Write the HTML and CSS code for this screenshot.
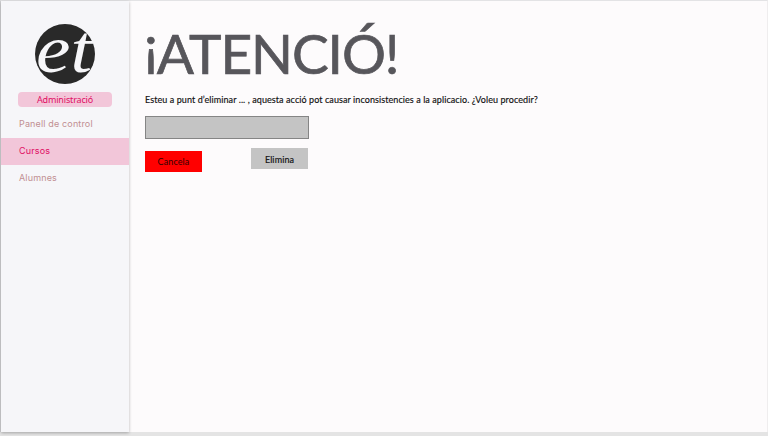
FILE: index.html
```html
<!DOCTYPE html>
<html lang="ca">
<head>
<meta charset="utf-8">
<title>Administració</title>
<link rel="stylesheet" href="styles.css">
</head>
<body>
<div class="app">
  <aside class="sidebar">
    <svg class="logo" viewBox="0 0 60 60" role="img" aria-label="et">
      <circle cx="30" cy="30" r="30"/>
      <text class="logo-text" x="1" y="48" textLength="56" lengthAdjust="spacingAndGlyphs">et</text>
    </svg>
    <div class="role">Administració</div>
    <nav class="menu">
      <a class="item">Panell de control</a>
      <a class="item active">Cursos</a>
      <a class="item">Alumnes</a>
    </nav>
  </aside>
  <main class="content">
    <h1><span class="open">¡</span>ATENCIÓ!</h1>
    <p class="message">Esteu a punt d’eliminar ... , aquesta acció pot causar inconsistencies a la aplicacio. ¿Voleu procedir?</p>
    <input class="field" type="text" aria-label="Confirmació">
    <div class="actions">
      <button class="btn cancel">Cancela</button>
      <button class="btn delete">Elimina</button>
    </div>
  </main>
</div>
</body>
</html>
```
FILE: styles.css
```css
* { box-sizing: border-box; }
body {
  margin: 0;
  height: 436px;
  overflow: hidden;
  background: #e4e4e4;
  font-family: Lato, "Liberation Sans", sans-serif;
}
.app {
  display: flex;
  height: 432px;
  background: #fdfbfc;
  border-top: 1px solid #e3e3e5;
  border-left: 1px solid #d4d4d6;
  border-right: 1px solid #efedee;
}
.sidebar {
  display: flex;
  flex-direction: column;
  align-items: center;
  width: 128px;
  padding-top: 23px;
  background: #f6f6f9;
  box-shadow: 0 1px 3px rgba(0, 0, 0, .28);
}
.logo { width: 60px; height: 60px; flex: none; overflow: visible; }
.logo circle { fill: #292929; }
.logo-text {
  fill: #f6f6f9;
  font: italic 67px "Liberation Serif", serif;
}
.role {
  width: 94px;
  height: 15px;
  margin-top: 8px;
  border-radius: 4px;
  background: #f2c6d9;
  color: #e00d63;
  font: 9px/15px "Noto Sans", sans-serif;
  letter-spacing: -.15px;
  text-align: center;
}
.menu { width: 100%; margin-top: 3.500px; }
.item {
  display: block;
  height: 27px;
  padding-left: 18px;
  color: #c18f92;
  font: 9px/26px Inter, sans-serif;
  letter-spacing: .15px;
}
.item.active { background: #f2c6d9; color: #e00d63; }
.content { padding: 13px 0 0 16px; }
h1 {
  margin: 0 0 0 -1px;
  height: 79px;
  color: #57565b;
  font-size: 55px;
  font-weight: 400;
  line-height: 78px;
  letter-spacing: -1.1px;
  -webkit-text-stroke: .7px #57565b;
  white-space: nowrap;
}
.open { display: inline-block; transform: translateY(-9px); }
.message {
  margin: 0;
  color: #111;
  font-size: 9px;
  line-height: 13px;
  letter-spacing: .08px;
  -webkit-text-stroke: .15px #111;
  white-space: nowrap;
}
.field {
  display: block;
  width: 164px;
  height: 23px;
  margin-top: 10px;
  border: 1px solid #858585;
  background: #c4c4c4;
}
.actions {
  display: flex;
  justify-content: space-between;
  width: 163px;
  margin-top: 9px;
}
.btn {
  width: 57px;
  height: 21px;
  padding: 0;
  border: 0;
  background: #c4c4c4;
  color: #111;
  font: 9px/21px Lato, sans-serif;
  letter-spacing: .1px;
}
.delete { padding-top: 1px; -webkit-text-stroke: .15px #111; }
.cancel { margin-top: 3px; background: #f00; color: #300; }
```
